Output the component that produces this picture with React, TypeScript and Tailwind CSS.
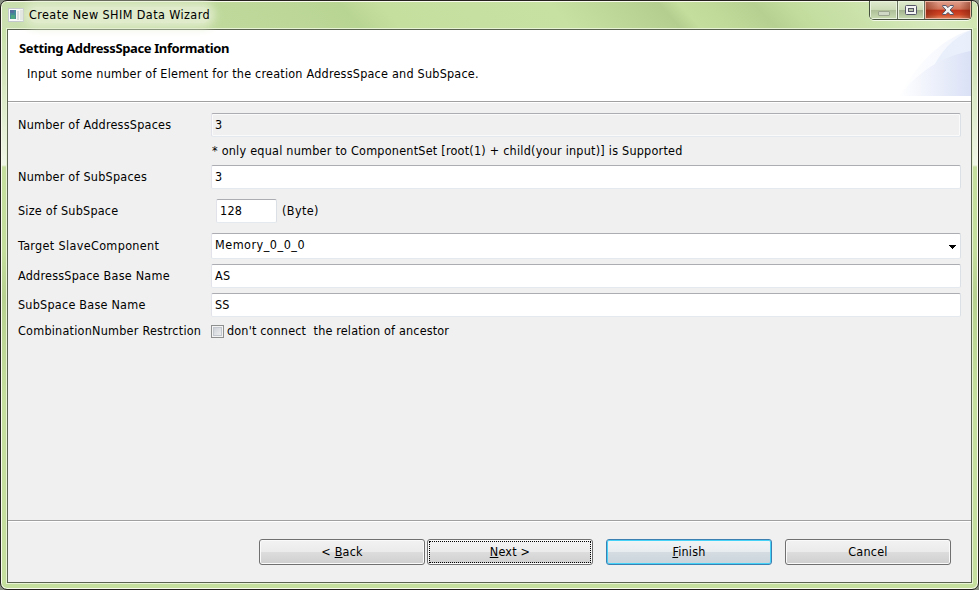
import type { ReactNode } from "react";

const FIELD =
  "flex items-center rounded-[2px] border border-t-[#abadb3] border-r-[#dbdfe6] border-b-[#e3e9ef] border-l-[#e2e3ea] pl-[3px]";

function Row({ label, className, children }: { label: ReactNode; className: string; children: ReactNode }) {
  return (
    <div className={`flex items-center ${className}`}>
      <div className="w-[193px] shrink-0">{label}</div>
      {children}
    </div>
  );
}

function PushButton({ className, children }: { className: string; children: ReactNode }) {
  return (
    <button
      className={`flex h-[26px] w-[166px] items-center justify-center rounded-[3px] border pb-px tracking-[0.22px] ${className}`}
    >
      {children}
    </button>
  );
}

const GREY =
  "border-[#707070] bg-[linear-gradient(#f2f2f2_0%,#ebebeb_48%,#dddddd_50%,#cfcfcf_100%)] shadow-[inset_0_0_0_1px_#fafafa]";

export default function App() {
  return (
    <div className="flex h-[590px] w-[979px] bg-[#8a8f84] font-['DejaVu_Sans_Condensed','DejaVu_Sans',sans-serif] text-[12.5px] leading-[16px] tracking-[0.23px] text-black [font-stretch:condensed]">
      <div className="flex w-full flex-col rounded-[7px] border border-[#25211f] bg-[linear-gradient(#c4dfa0_0px,#cfe3b5_60px,#f0f6e7_164px,#c5df9f_166px,#c3de9d_250px,#b7d191_295px,#c5df9f_400px,#c5df9f_590px)] shadow-[inset_0_0_0_1px_#f8fbee]">
        <header className="relative mx-px mt-px flex h-[26px] items-center rounded-t-[5px] bg-[linear-gradient(48deg,#cbdfb0_0%,#c0da9d_18%,#bcd798_30%,#b9d593_36%,#c5df9f_40%,#c7e1a3_57%,#b3ce8e_68%,#c4de9e_70%,#c0da9a_73%,#b5d090_77.5%,#c2dc9d_81%,#cce3ad_88%,#d7e9bd_94%,#cfe5af_100%)] pl-[6px]">
          <svg width="16" height="14" viewBox="0 0 16 14" className="-mt-px" shapeRendering="crispEdges">
            <rect width="16" height="14" fill="#c3c8cc" />
            <rect x="1" y="1" width="14" height="12" fill="#fafafa" />
            <rect x="2" y="2" width="6" height="9" fill="#448a96" />
            <rect x="2" y="2" width="4" height="3" fill="#526e9d" />
            <rect x="3" y="7" width="4" height="4" fill="#4da67f" />
            <rect x="9" y="3" width="2" height="9" fill="#d9dce0" />
            <rect x="12" y="2" width="3" height="10" fill="#e4e6e8" />
          </svg>
          <span className="ml-[5px] rounded-full bg-[#dfebca] tracking-[0.41px] shadow-[0_0_9px_5px_#dfebca]">Create New SHIM Data Wizard</span>
          <div className="absolute -top-px right-[5px] flex h-[19px] w-[103px] overflow-hidden rounded-b-[5px] border border-t-0 border-[#46503e] shadow-[0_1px_0_#f3f9e9]">
            <div className="flex w-[28px] items-center justify-center border-r border-[#66705c] bg-[linear-gradient(#e0eacf_0%,#ccdbb7_48%,#aebf98_50%,#c7dbb0_100%)] shadow-[inset_0_0_0_1px_#eaf3df]">
              <div className="mt-[6px] h-[5px] w-3 rounded-[1px] border border-[#9ba58f] bg-[#d0d9c6]" />
            </div>
            <div className="flex w-[27px] items-center justify-center border-r border-[#66705c] bg-[linear-gradient(#e0eacf_0%,#ccdbb7_48%,#a2b18d_50%,#c7dbb0_100%)] shadow-[inset_0_0_0_1px_#eaf3df]">
              <svg width="12" height="10" viewBox="0 0 12 10">
                <rect x=".5" y=".5" width="11" height="9" rx="1" fill="#f4f4f4" stroke="#555568" />
                <rect x="3.5" y="3.5" width="5" height="3" fill="#b8c3a7" stroke="#555568" />
              </svg>
            </div>
            <div className="flex flex-1 items-center justify-center bg-[linear-gradient(90deg,#73200c88_0%,#d63b1700_30%,#d63b1700_75%,#73200c88_100%),linear-gradient(#e0a18f_0%,#d17459_46%,#bd321a_50%,#cf4625_75%,#e38b62_100%)] shadow-[inset_0_0_0_1px_#edb4a2]">
              <svg width="12" height="10" viewBox="0 0 12 10">
                <path d="M.7.5h3.2L6 2.6 8.1.5h3.2v1L8 5l3.3 3.5v1H8.1L6 7.4 3.9 9.5H.7v-1L4 5 .7 1.5z" fill="#f3f3f3" stroke="#53566b" />
              </svg>
            </div>
          </div>
        </header>

        <main className="mx-[5px] mb-[5px] flex flex-1 flex-col border border-[#e8f3d5] p-0">
          <div className="flex flex-1 flex-col border border-[#59634f] bg-[#f0f0f0]">
            <section className="flex h-[73px] border-b border-b-white bg-white">
              <div className="flex flex-1 justify-between border-b border-[#a0a0a0]">
                <div className="pl-[11px] pt-[10px]">
                  <h1 className="font-['Noto_Sans','Open_Sans',sans-serif] text-[13px] font-bold leading-[17px] tracking-[-0.37px]">
                    Setting AddressSpace Information
                  </h1>
                  <p className="ml-[8px] mt-[9px] tracking-[0.22px]">
                    Input some number of Element for the creation AddressSpace and SubSpace.
                  </p>
                </div>
                <svg width="72" height="66" viewBox="0 0 72 66">
                  <defs>
                    <linearGradient id="outer">
                      <stop stopColor="#fff" />
                      <stop offset=".4" stopColor="#fafbfe" />
                      <stop offset="1" stopColor="#f0f4fc" />
                    </linearGradient>
                    <linearGradient id="inner">
                      <stop stopColor="#fff" />
                      <stop offset="1" stopColor="#dae1f6" />
                    </linearGradient>
                  </defs>
                  <path d="M0 66C15 39 38 10 72 0V66Z" fill="url(#outer)" />
                  <path d="M32 42Q45 12 72 0V30Z" fill="#e6edfa" fillOpacity=".8" />
                  <path d="M0 66C22 38 48 25 72 21V66Z" fill="url(#inner)" />
                </svg>
              </div>
            </section>

            <section className="flex flex-1 flex-col pl-[10px] pr-[10px] pt-[10px]">
              <Row className="h-6" label="Number of AddressSpaces">
                <div className={`${FIELD} h-6 flex-1 shadow-[inset_0_0_0_1px_#fafafa]`}>3</div>
              </Row>
              <p className="ml-[194px] mt-[6px] h-4">* only equal number to ComponentSet [root(1) + child(your input)] is Supported</p>
              <Row className="mt-[6px] h-6" label="Number of SubSpaces">
                <div className={`${FIELD} h-6 flex-1 bg-white`}>3</div>
              </Row>
              <Row className="mt-[10px] h-6" label="Size of SubSpace">
                <div className={`${FIELD} ml-[5px] h-6 w-[61px] bg-white`}>128</div>
                <span className="ml-[5px] tracking-[0.4px]">(Byte)</span>
              </Row>
              <Row className="mt-[10px] h-[26px]" label={<span className="tracking-[0.34px]">Target SlaveComponent</span>}>
                <div className={`${FIELD} h-[26px] flex-1 justify-between bg-white pb-[2px] pr-[4px]`}>
                  <span className="tracking-[0.5px]">Memory_0_0_0</span>
                  <svg width="7" height="4" viewBox="0 0 7 4" className="mt-[4px]" shapeRendering="crispEdges">
                    <path d="M0 0h7v1H6v1H5v1H4v1H3V3H2V2H1V1H0z" />
                  </svg>
                </div>
              </Row>
              <Row className="mt-[5px] h-6" label="AddressSpace Base Name">
                <div className={`${FIELD} h-6 flex-1 bg-white`}>AS</div>
              </Row>
              <Row className="mt-[5px] h-6" label="SubSpace Base Name">
                <div className={`${FIELD} h-6 flex-1 bg-white`}>SS</div>
              </Row>
              <Row className="mt-[6px] h-4" label="CombinationNumber Restrction">
                <span className="h-[13px] w-[13px] border border-[#8e8f8f] bg-[linear-gradient(135deg,#c5cad1,#f5f5f5)] shadow-[inset_0_0_0_1px_#f4f4f4,inset_0_0_0_2px_#c3c8cf]" />
                <span className="ml-[3px] whitespace-pre tracking-[0.16px]">don't connect  the relation of ancestor</span>
              </Row>
            </section>

            <footer className="flex h-[62px] border-t border-[#a0a0a0]">
              <div className="flex flex-1 justify-end border-t border-white pr-[20px] pt-[17px]">
                <PushButton className={GREY}>
                  <span>&lt; <u>B</u>ack</span>
                </PushButton>
                <PushButton className={`relative ml-[2px] ${GREY}`}>
                  <span>
                    <u>N</u>ext &gt;
                  </span>
                  <span className="absolute inset-[1px] border border-dotted border-black" />
                </PushButton>
                <PushButton className="ml-[13px] border-[#3c7fb1] bg-[linear-gradient(#f2f4f5_0%,#e7ecef_48%,#d5dde2_50%,#c9d3da_100%)] shadow-[inset_0_0_0_1px_#45d2f8]">
                  <span>
                    <u>F</u>inish
                  </span>
                </PushButton>
                <PushButton className={`ml-[13px] ${GREY}`}>Cancel</PushButton>
              </div>
            </footer>
          </div>
        </main>
      </div>
    </div>
  );
}
